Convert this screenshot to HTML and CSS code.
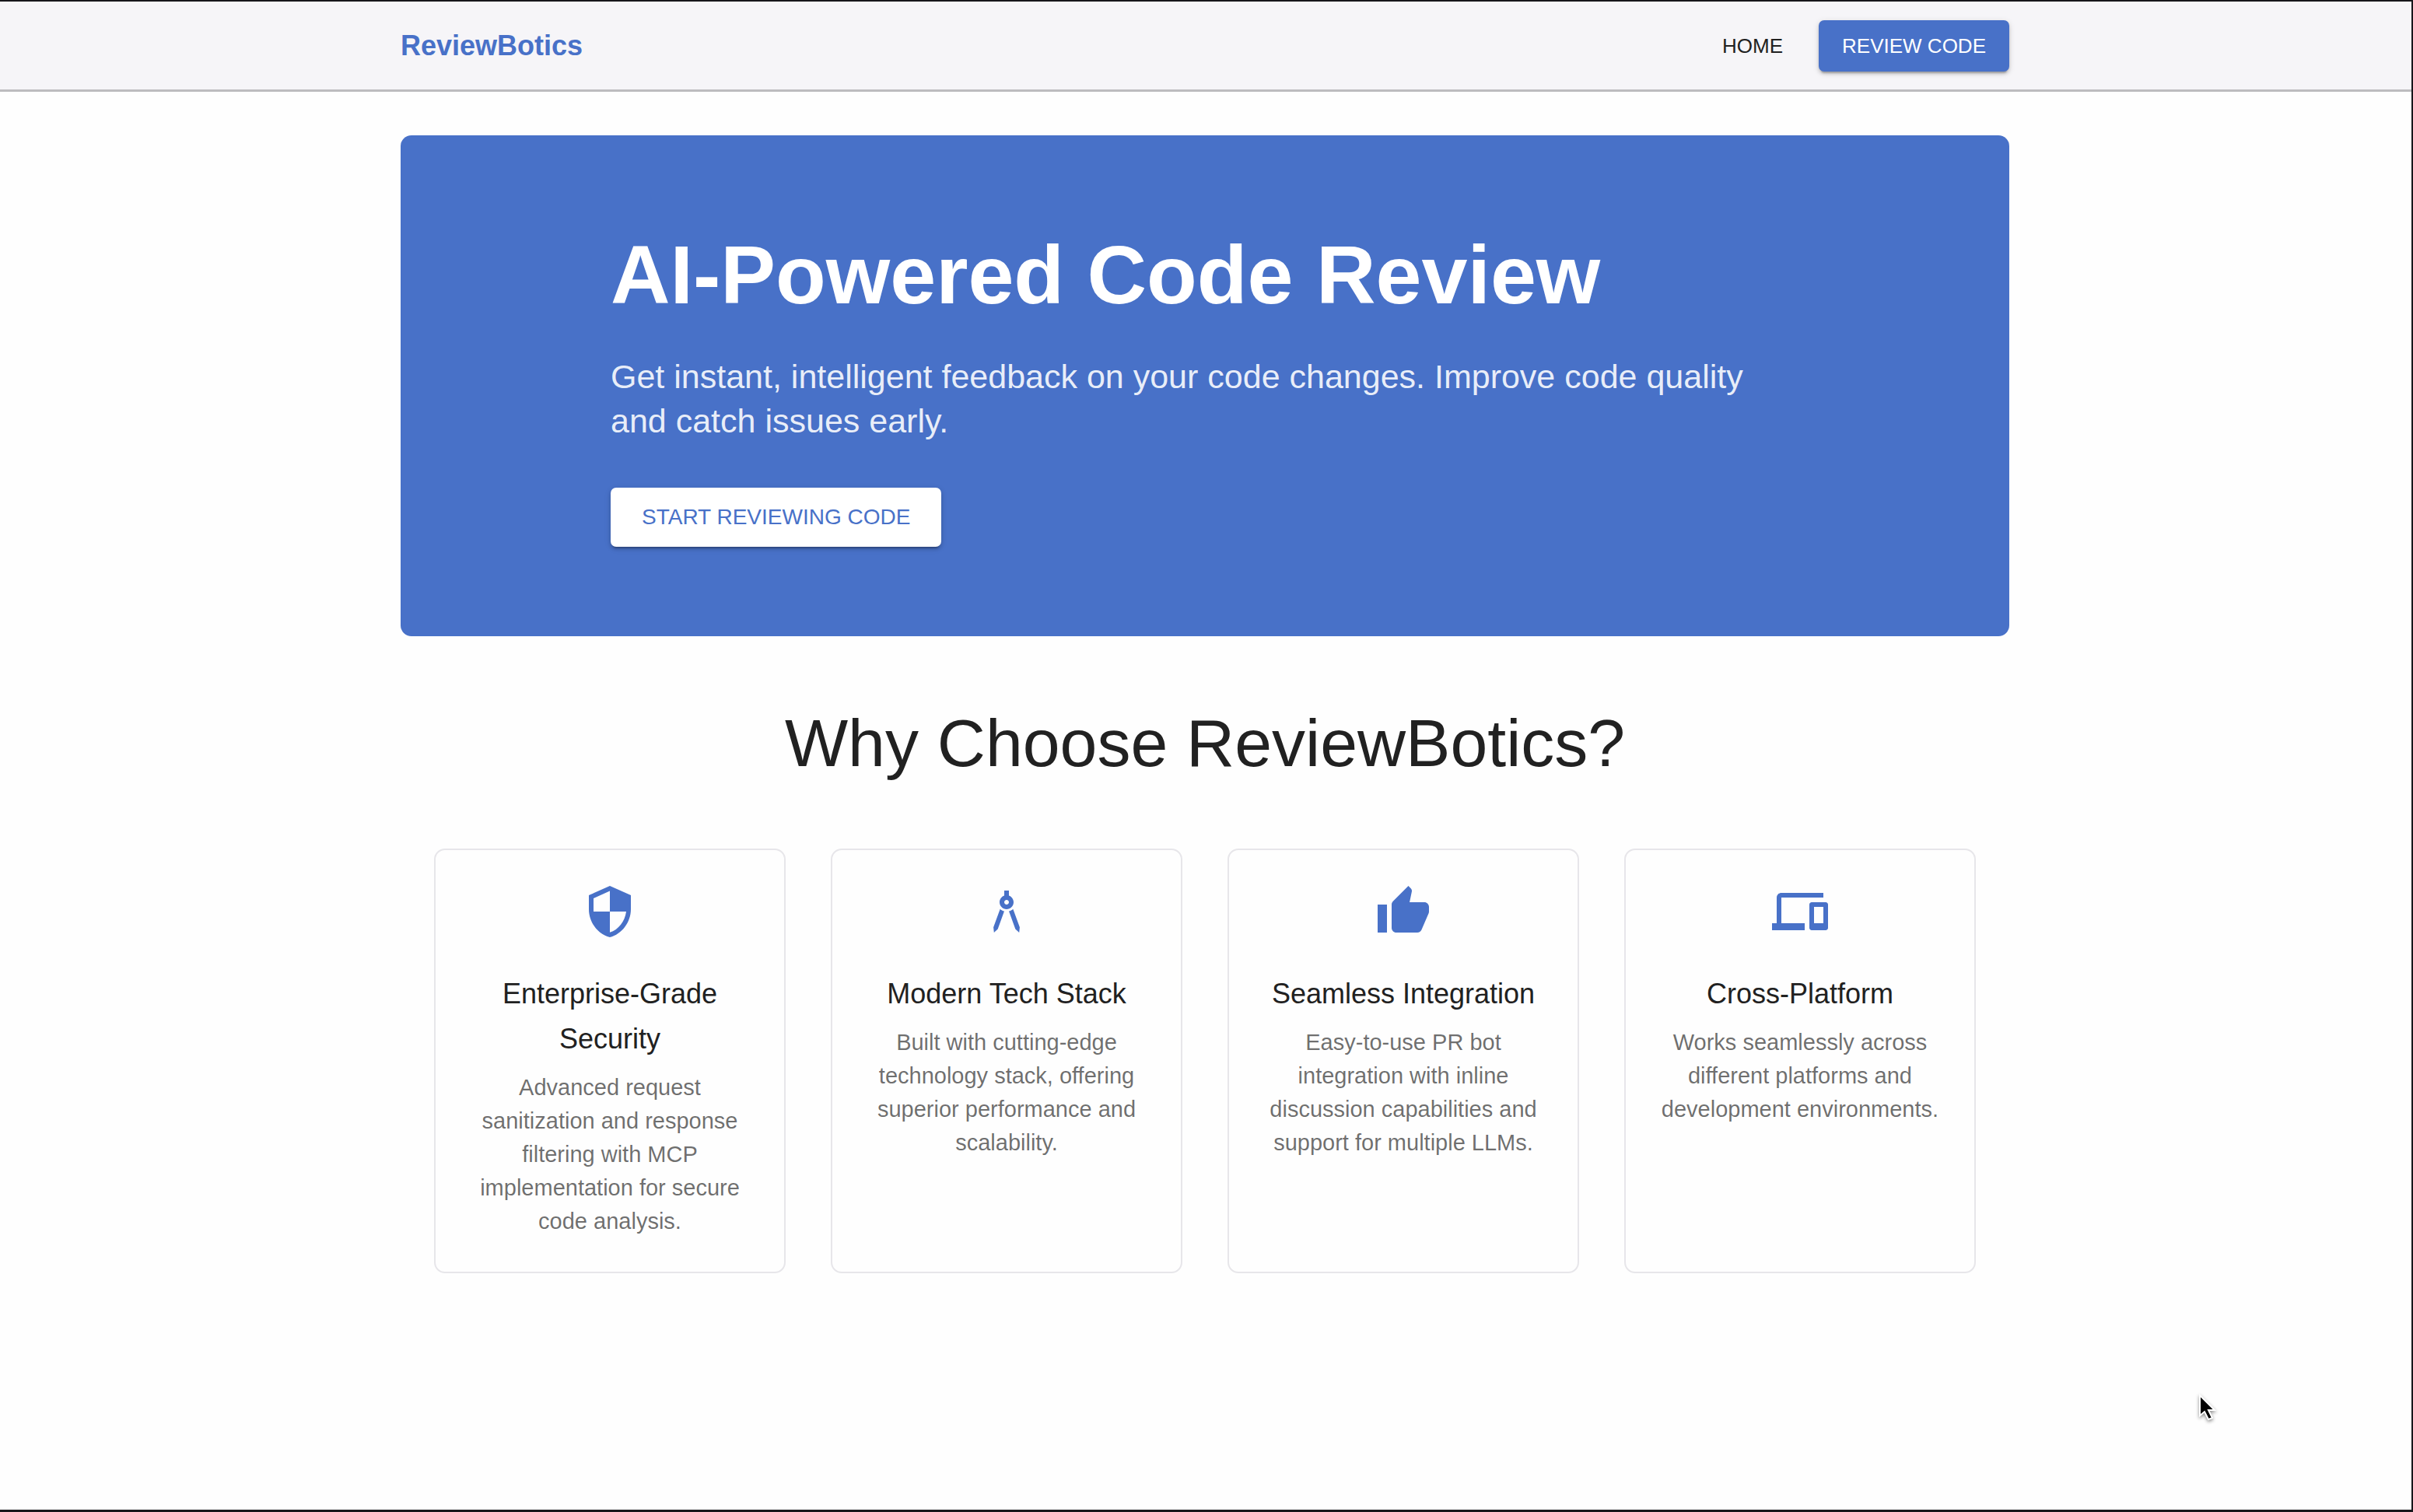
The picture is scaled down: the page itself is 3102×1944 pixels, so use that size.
FILE: index.html
```html
<!DOCTYPE html>
<html lang="en">
<head>
  <meta charset="utf-8">
  <meta name="viewport" content="width=device-width, initial-scale=1">
  <title>ReviewBotics</title>
  <link rel="stylesheet" href="styles.css">
</head>
<body class="page">
  <header class="header">
    <div class="container header-row">
      <a class="brand" href="#">ReviewBotics</a>
      <nav class="nav">
        <a class="nav-link" href="#">HOME</a>
        <button class="button button-primary" type="button">REVIEW CODE</button>
      </nav>
    </div>
  </header>

  <main class="main">
    <div class="container">
      <section class="hero">
        <div class="hero-content">
          <h1 class="hero-title">AI-Powered Code Review</h1>
          <p class="hero-text">Get instant, intelligent feedback on your code changes. Improve code quality and catch issues early.</p>
          <button class="button button-light" type="button">START REVIEWING CODE</button>
        </div>
      </section>

      <section class="features">
        <h2 class="features-title">Why Choose ReviewBotics?</h2>
        <div class="feature-grid">
          <article class="card">
            <svg class="card-icon" viewBox="0 0 24 24" aria-hidden="true"><path d="M12 1L3 5v6c0 5.55 3.84 10.74 9 12 5.16-1.26 9-6.45 9-12V5l-9-4zm0 10.99h7c-.53 4.12-3.28 7.79-7 8.94V12H5V6.3l7-3.11v8.8z"/></svg>
            <h3 class="card-title">Enterprise-Grade Security</h3>
            <p class="card-text">Advanced request sanitization and response filtering with MCP implementation for secure code analysis.</p>
          </article>
          <article class="card">
            <svg class="card-icon" viewBox="0 0 24 24" aria-hidden="true"><path d="M6.36 18.78L6.61 21l1.62-1.54 2.77-7.6c-.68-.17-1.28-.51-1.77-.98l-2.87 7.9zM14.77 10.88c-.49.47-1.1.81-1.77.98l2.77 7.6L17.39 21l.25-2.22-2.87-7.9zM15 8c0-1.3-.84-2.4-2-2.82V3h-2v2.18C9.84 5.6 9 6.7 9 8c0 1.66 1.34 3 3 3s3-1.34 3-3zm-3 1c-.55 0-1-.45-1-1s.45-1 1-1 1 .45 1 1-.45 1-1 1z"/></svg>
            <h3 class="card-title">Modern Tech Stack</h3>
            <p class="card-text">Built with cutting-edge technology stack, offering superior performance and scalability.</p>
          </article>
          <article class="card">
            <svg class="card-icon" viewBox="0 0 24 24" aria-hidden="true"><path d="M1 21h4V9H1v12zm22-11c0-1.1-.9-2-2-2h-6.31l.95-4.57.03-.32c0-.41-.17-.79-.44-1.06L14.17 1 7.59 7.59C7.22 7.95 7 8.45 7 9v10c0 1.1.9 2 2 2h9c.83 0 1.54-.5 1.84-1.22l3.02-7.05c.09-.23.14-.47.14-.73v-2z"/></svg>
            <h3 class="card-title">Seamless Integration</h3>
            <p class="card-text">Easy-to-use PR bot integration with inline discussion capabilities and support for multiple LLMs.</p>
          </article>
          <article class="card">
            <svg class="card-icon" viewBox="0 0 24 24" aria-hidden="true"><path d="M4 6h18V4H4c-1.1 0-2 .9-2 2v11H0v3h14v-3H4V6zm19 2h-6c-.55 0-1 .45-1 1v10c0 .55.45 1 1 1h6c.55 0 1-.45 1-1V9c0-.55-.45-1-1-1zm-1 9h-4v-7h4v7z"/></svg>
            <h3 class="card-title">Cross-Platform</h3>
            <p class="card-text">Works seamlessly across different platforms and development environments.</p>
          </article>
        </div>
      </section>
    </div>
  </main>

  <svg class="pointer" viewBox="0 0 24 37" aria-hidden="true"><path d="M2 2v26l6-5 5 10 5-2-5-10h8z"/></svg>
</body>
</html>
```

FILE: styles.css
```css
:root {
  --blue: #4871c8;
  --ink: #212121;
  --muted: rgba(0, 0, 0, 0.58);
  --shadow: 0 5px 2px -3px rgba(0, 0, 0, 0.2), 0 3px 4px rgba(0, 0, 0, 0.14), 0 2px 9px rgba(0, 0, 0, 0.12);
}

* {
  box-sizing: border-box;
}

.page {
  position: relative;
  min-height: 100vh;
  margin: 0;
  border: solid #17161b;
  border-width: 2px 2px 3px 0;
  background: #fefefe;
  color: var(--ink);
  font-family: "Liberation Sans", Arial, Helvetica, sans-serif;
}

.header,
.main {
  padding-right: 2px;
}

.container {
  width: 100%;
  max-width: 2068px;
  margin: 0 auto;
}

.header {
  border-top: 2px solid #fdfdfd;
  border-bottom: 3px solid #bdbcbf;
  background: #f6f5f8;
}

.header-row {
  display: flex;
  align-items: center;
  justify-content: space-between;
  padding: 22px 0 23px;
}

.brand {
  color: var(--blue);
  font-size: 36px;
  font-weight: 700;
  line-height: 58px;
  text-decoration: none;
}

.nav {
  display: flex;
  align-items: center;
  gap: 32px;
}

.nav-link {
  padding: 0 14px;
  color: var(--ink);
  font-size: 26px;
  text-decoration: none;
}

.button {
  border: 0;
  border-radius: 7px;
  font-family: inherit;
  box-shadow: var(--shadow);
  cursor: pointer;
}

.button-primary {
  padding: 10px 30px;
  background: var(--blue);
  color: #fff;
  font-size: 26px;
  line-height: 46px;
}

.button-light {
  padding: 14px 40px;
  background: #fff;
  color: var(--blue);
  font-size: 28px;
  line-height: 48px;
}

.hero {
  margin-top: 56px;
  padding: 115px 32px;
  border-radius: 14px;
  background: var(--blue);
  color: #fff;
}

.hero-content {
  max-width: 1528px;
  margin: 0 auto;
}

.hero-title {
  margin: 0 0 38px;
  font-size: 106px;
  font-weight: 700;
  line-height: 129px;
}

.hero-text {
  margin: 0 0 57px;
  color: rgba(255, 255, 255, 0.9);
  font-size: 43px;
  line-height: 57px;
}

.features {
  padding: 87px 43px;
}

.features-title {
  margin: 0 0 86px;
  font-size: 86px;
  font-weight: 400;
  line-height: 100px;
  text-align: center;
}

.feature-grid {
  display: grid;
  grid-template-columns: repeat(4, 1fr);
  gap: 58px;
}

.card {
  display: flex;
  flex-direction: column;
  align-items: center;
  padding: 43px;
  border: 2px solid #e7e6ea;
  border-radius: 14px;
  text-align: center;
}

.card-icon {
  width: 72px;
  height: 72px;
  margin-bottom: 41px;
  fill: var(--blue);
}

.card-title {
  margin: 0 0 12px;
  font-size: 36px;
  font-weight: 400;
  line-height: 58px;
}

.card-text {
  margin: 0;
  color: var(--muted);
  font-size: 29px;
  line-height: 43px;
}

.pointer {
  position: absolute;
  right: 250px;
  bottom: 112px;
  width: 24px;
  height: 37px;
  fill: #000;
  stroke: #fff;
  stroke-width: 2;
  filter: drop-shadow(0 2px 2px rgba(0, 0, 0, 0.45));
}
```
